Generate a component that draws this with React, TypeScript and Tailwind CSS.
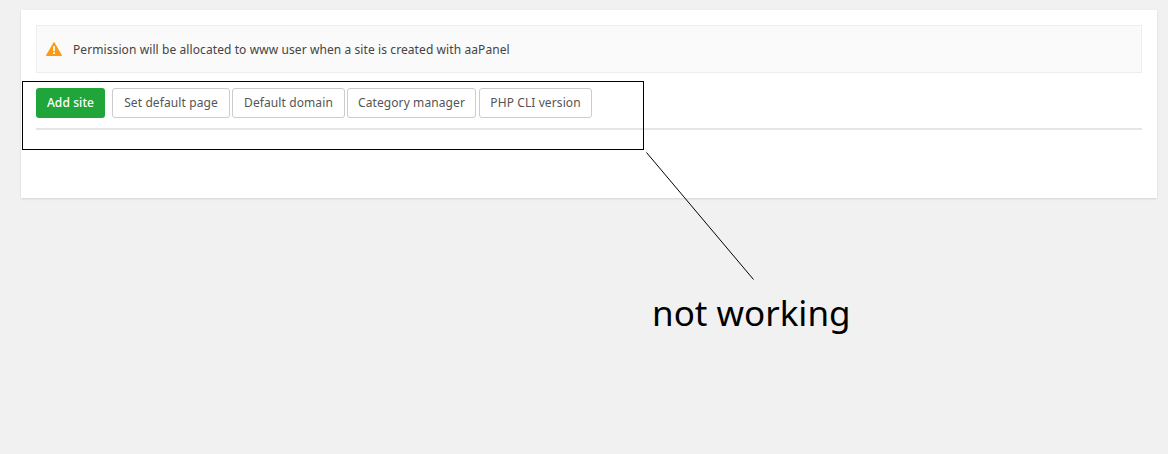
const buttons = [
	{ label: "Set default page", width: "w-[118px]", margin: "ml-[7px]" },
	{ label: "Default domain", width: "w-[113px]", margin: "ml-[2px]" },
	{ label: "Category manager", width: "w-[129px]", margin: "ml-[2px]" },
	{ label: "PHP CLI version", width: "w-[113px]", margin: "ml-[3px]" },
];

export default function App() {
	return (
		<div className="relative h-[454px] w-[1168px] overflow-hidden bg-[#f1f1f1] px-[21px] pt-[10px] font-['Noto_Sans',sans-serif]">
			<div className="h-[188px] w-[1136px] bg-white px-[15px] pt-[15px] shadow-[0_1px_2px_rgba(0,0,0,0.12)]">
				<div className="flex h-[48px] items-center border border-[#eeeeee] bg-[#fafafa] pl-[9px]">
					<svg width="16" height="14" viewBox="0 0 16 14" className="shrink-0">
						<path d="M8 0.5 L15.6 13.5 L0.4 13.5 Z" fill="#fb9a13" stroke="#fb9a13" strokeLinejoin="round" />
						<rect x="7.1" y="4.2" width="1.8" height="5" fill="#fff" />
						<rect x="7.1" y="10.2" width="1.8" height="1.8" fill="#fff" />
					</svg>
					<span className="ml-[11px] pt-[2px] text-[12px] tracking-[0.09px] text-[#444444]">
						Permission will be allocated to www user when a site is created with aaPanel
					</span>
				</div>
				<div className="mt-[15px] flex h-[30px]">
					<button className="h-[30px] w-[69px] rounded-[3px] bg-[#20a53a] text-[12px] font-medium tracking-[0.1px] text-white">
						Add site
					</button>
					{buttons.map(b => (
						<button
							key={b.label}
							className={`h-[30px] rounded-[3px] border border-[#cccccc] bg-white text-[12px] tracking-[0.1px] text-[#555555] ${b.width} ${b.margin}`}
						>
							{b.label}
						</button>
					))}
				</div>
				<div className="mt-[10px] h-[2px] bg-[#e5e5e5]" />
			</div>

			{/* annotation drawn on top of the screenshot */}
			<div className="absolute left-[22px] top-[81px] h-[69px] w-[622px] border border-black" />
			<svg width="1168" height="454" className="absolute left-0 top-0">
				<line x1="646.5" y1="152.5" x2="753.5" y2="279.5" stroke="#000" strokeWidth="1" />
			</svg>
			<div className="absolute left-[652px] top-[288px] text-[35px] leading-[50px] text-black">
				not working
			</div>
		</div>
	);
}
